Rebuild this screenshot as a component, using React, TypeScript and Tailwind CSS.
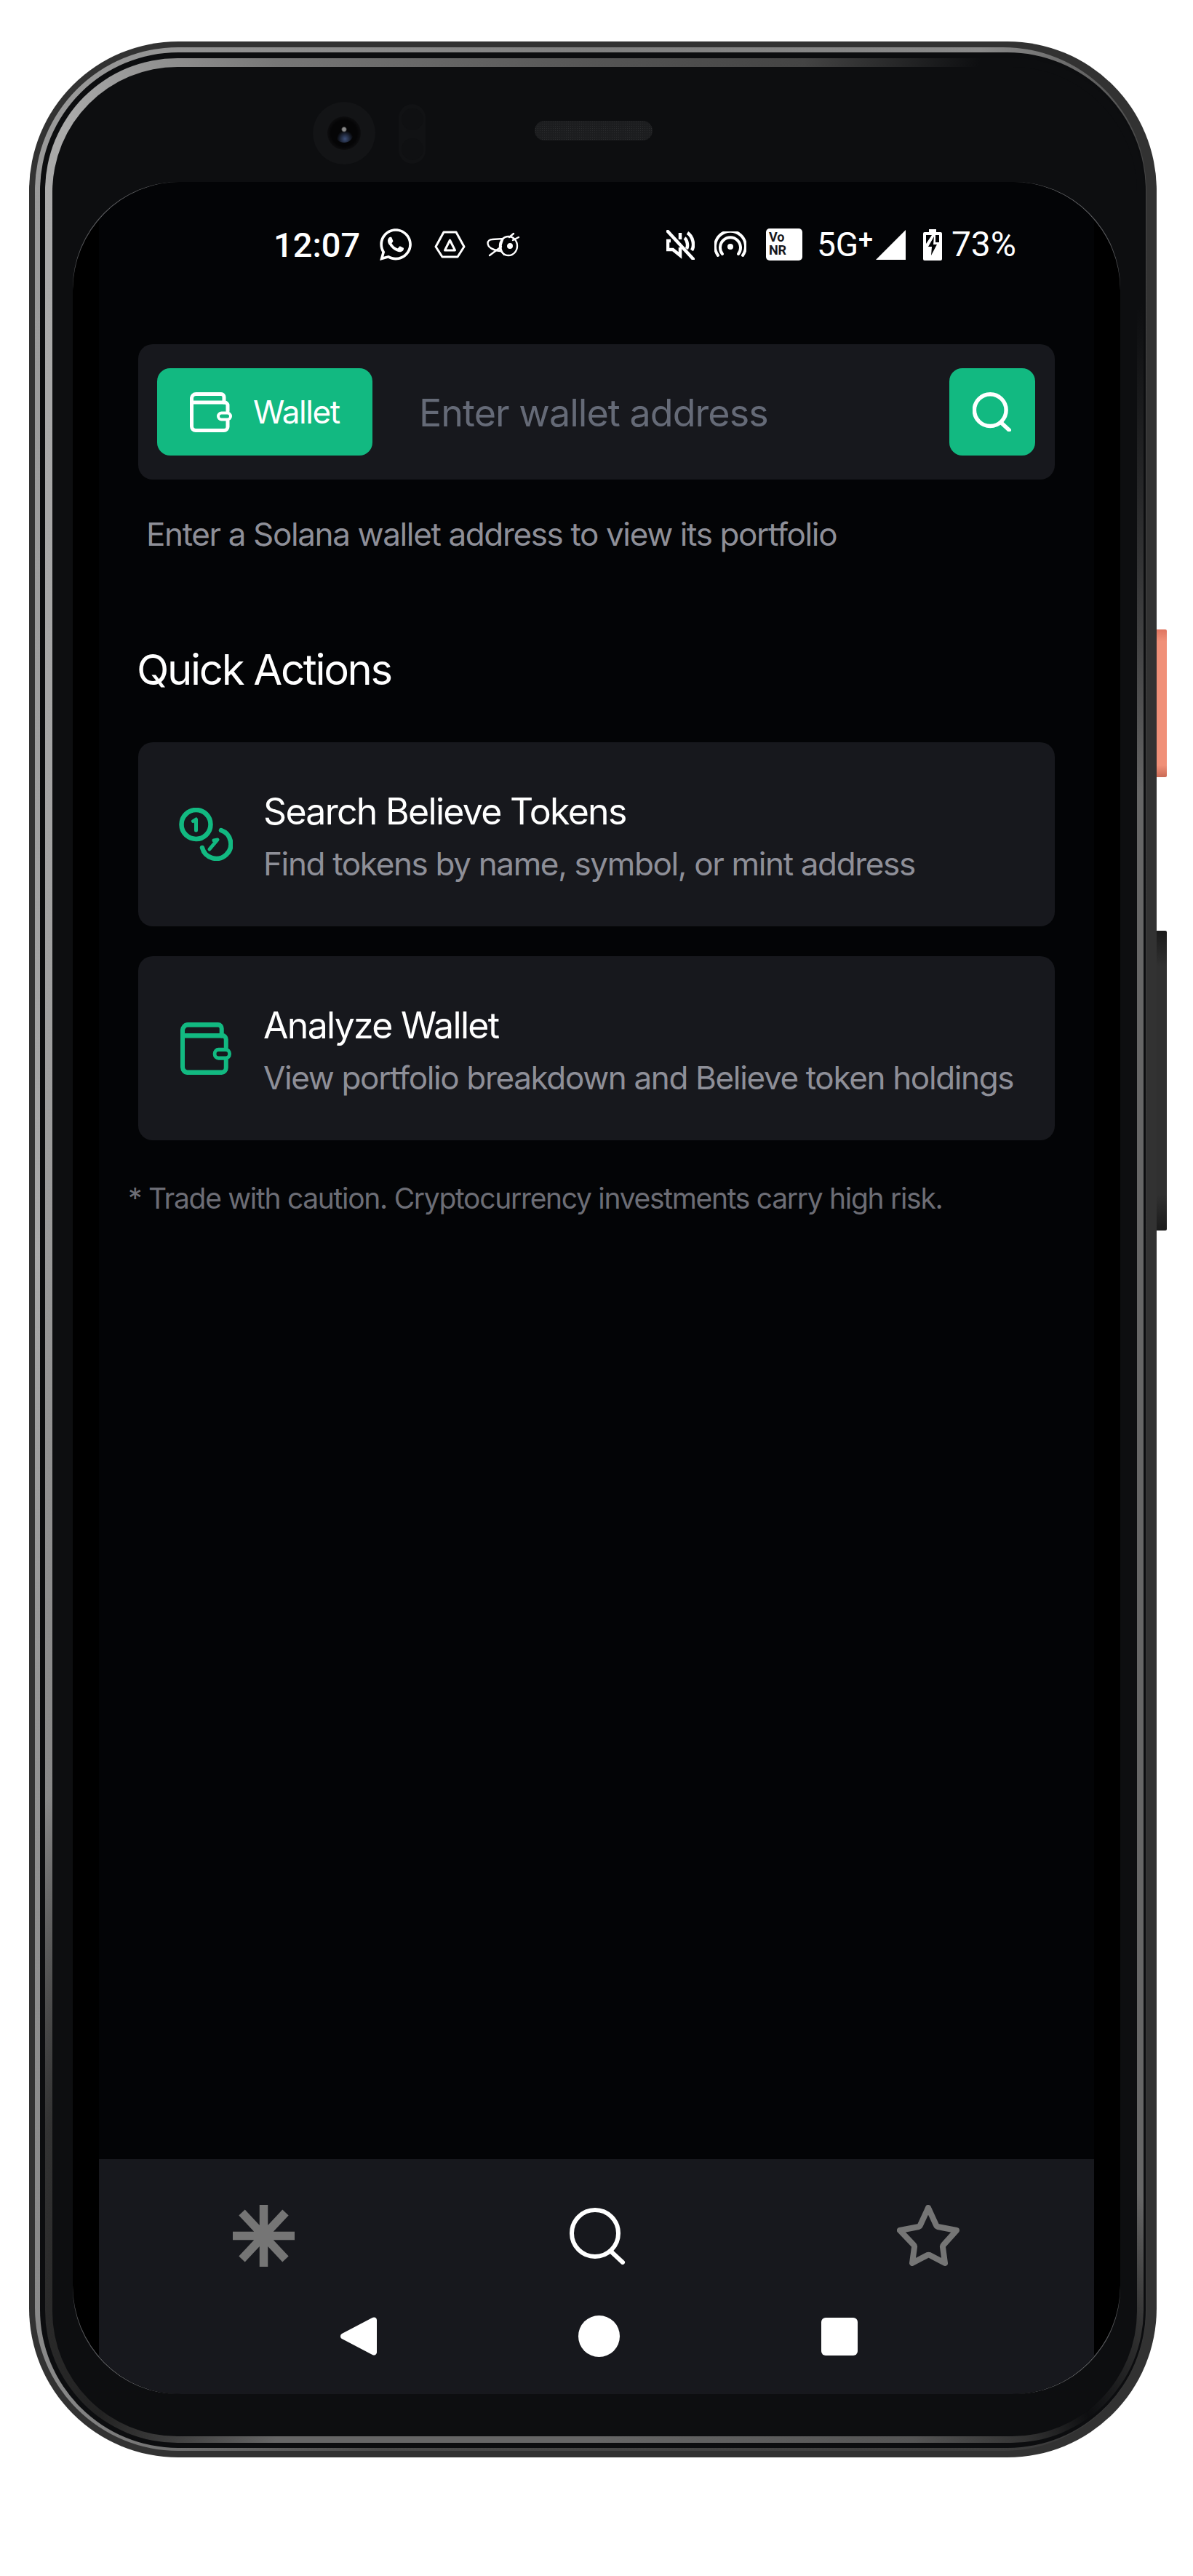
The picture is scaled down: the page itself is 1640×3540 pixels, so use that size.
import { FaWhatsapp } from "react-icons/fa";

const APP_FONT = "font-['Inter','Liberation_Sans',sans-serif]";
const STATUS_FONT = "font-['Roboto','Liberation_Sans',sans-serif]";

function WalletIcon({ className, stroke }: { className: string; stroke: string }) {
  return (
    <svg className={className} viewBox="0 0 58 55" preserveAspectRatio="none" fill="none" stroke={stroke} strokeWidth="5" strokeLinecap="round">
      <path d="M2.5 8.5a6 6 0 0 1 6-6H43a4 4 0 0 1 4 4V14" />
      <path d="M2.5 8.5V47A5.5 5.5 0 0 0 8 52.5h39a5 5 0 0 0 5-5V40" />
      <path d="M2.5 14H48a4 4 0 0 1 4 4v8" />
      <rect x="39" y="28.5" width="17" height="9" rx="4.5" strokeWidth="4" />
    </svg>
  );
}

function CoinsIcon() {
  return (
    <svg className="h-[73px] w-[74px]" viewBox="0 0 74 73" fill="none" stroke="#12b981" strokeWidth="6.5" strokeLinecap="round" strokeLinejoin="round">
      <circle cx="23.5" cy="23" r="20" />
      <path d="M19.5 18.5l4-2.5v15" strokeWidth="5" />
      <path d="M58 31A20 20 0 1 1 32 55" />
      <path d="M42 57l11-13-5 1" strokeWidth="5" />
    </svg>
  );
}

function SearchIcon({ className, strokeWidth }: { className: string; strokeWidth: number }) {
  return (
    <svg className={className} viewBox="0 0 78 79" fill="none" stroke="#fff" strokeWidth={strokeWidth} strokeLinecap="round">
      <ellipse cx="35" cy="36" rx="32" ry="32" />
      <path d="M58 62l15 14" />
    </svg>
  );
}

function AsteriskIcon() {
  return (
    <svg className="-ml-[3px] h-[85px] w-[85px]" viewBox="0 0 85 85" fill="none" stroke="#757575" strokeWidth="11.5">
      <path d="M42.5 0v85M0 42.5h85M12.5 10.5l60 64M72.5 10.5l-60 64" />
    </svg>
  );
}

function StarIcon() {
  return (
    <svg className="h-[84px] w-[86px]" viewBox="0 0 86 84" fill="none" stroke="#757575" strokeWidth="8" strokeLinejoin="round">
      <path d="M43 4l11 24a3 3 0 0 0 2 2l26 5-18 20a3 3 0 0 0-1 3l3 22-21-11a4 4 0 0 0-3 0L21 80l3-22a3 3 0 0 0-1-3L4 35l26-5a3 3 0 0 0 2-2Z" />
    </svg>
  );
}

function HexIcon() {
  return (
    <svg className="h-[38px] w-[43px]" viewBox="0 0 43 38" fill="none" stroke="#fff" strokeWidth="3" strokeLinejoin="round">
      <path d="M13 2h17l11 20-9 14H11L2 22Z" />
      <path d="M21.5 13l7 14h-14Z" />
    </svg>
  );
}

function BeeIcon() {
  return (
    <svg className="h-[34px] w-[46px]" viewBox="0 0 46 34" fill="none" stroke="#fff" strokeWidth="2.4" strokeLinecap="round">
      <path d="M1.5 15c0-3 3-5 6-5l15-1c-2 5-4 11-4 17C9 25 1.5 21 1.5 15Z" />
      <ellipse cx="30" cy="19" rx="12" ry="13" />
      <path d="M22 9c-4 6-4 16 2 22" />
      <circle cx="32" cy="19" r="2.8" fill="#fff" />
      <path d="M4 32l16-12M31 7l6-5M36 11l8-4" />
    </svg>
  );
}

function MuteIcon() {
  return (
    <svg className="h-[41px] w-[39px]" viewBox="0 0 39 41" fill="none" stroke="#fff" strokeWidth="4.5">
      <path d="M2 2l35 38" strokeLinecap="round" />
      <path d="M6 15H2v12h7l10 8V24" />
      <path d="M19 4v9" />
      <path d="M25 11c4 3 5 11 3 15M29 4c8 5 10 18 6 24" />
    </svg>
  );
}

function HotspotIcon() {
  return (
    <svg className="h-[36px] w-[44px]" viewBox="0 0 44 36" fill="none" stroke="#fff" strokeWidth="4" strokeLinecap="round">
      <circle cx="22" cy="21" r="4" fill="#fff" stroke="none" />
      <path d="M11 31a14 14 0 1 1 22 0" />
      <path d="M5 33a21 21 0 1 1 34 0" />
    </svg>
  );
}

function BatteryIcon() {
  return (
    <svg className="h-[43px] w-[26px]" viewBox="0 0 26 43">
      <path d="M8 0h10v4h6a2 2 0 0 1 2 2v35a2 2 0 0 1-2 2H2a2 2 0 0 1-2-2V6a2 2 0 0 1 2-2h6Z" fill="#fff" />
      <path d="M4 8h8l-8 12ZM17 8h5v10h-5Z" fill="#030406" />
      <path d="M15 10L7 24h5l-1 12 8-15h-5Z" fill="#030406" />
    </svg>
  );
}

function StatusBar() {
  return (
    <div className={`flex h-[172px] shrink-0 items-center pr-[107px] pl-[240px] text-white ${STATUS_FONT}`}>
      <span className="w-[115px] text-[47px] leading-none font-medium">12:07</span>
      <FaWhatsapp className="ml-[28px] size-[50px]" />
      <span className="ml-[28px]"><HexIcon /></span>
      <span className="ml-[29px]"><BeeIcon /></span>

      <span className="ml-auto"><MuteIcon /></span>
      <span className="ml-[27px]"><HotspotIcon /></span>
      <div className="ml-[27px] flex h-[44px] w-[50px] flex-col rounded-[5px] bg-white pl-[4px] pt-[3px] text-[18px] leading-[18px] font-bold text-[#17181d]">
        <span>Vo</span>
        <span>NR</span>
      </div>
      <span className="ml-[20px] flex h-[44px] w-[72px] items-start text-[46px] leading-[44px] font-normal">
        5G<span className="-mt-[2px] text-[36px] leading-[36px] font-medium">+</span>
      </span>
      <svg className="ml-[9px] h-[41px] w-[41px]" viewBox="0 0 41 41">
        <path d="M41 0v41H0Z" fill="#fff" />
      </svg>
      <span className="ml-[24px]"><BatteryIcon /></span>
      <span className="ml-[13px] text-[48px] leading-none font-normal">73%</span>
    </div>
  );
}

function ActionCard({ icon, title, subtitle }: { icon: React.ReactNode; title: string; subtitle: string }) {
  return (
    <div className="flex h-[253px] items-center rounded-[20px] bg-[#17181d] pl-[56px]">
      <div className="flex w-[116px] shrink-0 items-center">{icon}</div>
      <div className="flex flex-col pt-[8px]">
        <span className="text-[50px] leading-[72px] tracking-[-1.7px] text-white">{title}</span>
        <span className="text-[44px] leading-[72px] tracking-[-1.35px] text-[#8e8f98]">{subtitle}</span>
      </div>
    </div>
  );
}

function BottomNav() {
  return (
    <nav className="flex h-[323px] shrink-0 flex-col bg-[#17181d]">
      <div className="grid h-[210px] grid-cols-3 place-items-center">
        <AsteriskIcon />
        <SearchIcon className="ml-[4px] h-[79px] w-[78px]" strokeWidth={6} />
        <StarIcon />
      </div>
      <div className="mt-[5px] flex items-center justify-center gap-[277px] pl-[4px]">
        <svg className="h-[57px] w-[52px]" viewBox="0 0 52 57">
          <path d="M46 3L4 25a4 4 0 0 0 0 7l42 22a4 4 0 0 0 6-3V6a4 4 0 0 0-6-3Z" fill="#fff" />
        </svg>
        <div className="size-[57px] rounded-full bg-white" />
        <div className="h-[52px] w-[50px] rounded-[6px] bg-white" />
      </div>
    </nav>
  );
}

function Screen() {
  return (
    <div className="flex-1 rounded-[146px] bg-[#5a5b5e]">
      <div className={`flex h-full overflow-hidden rounded-[149px] bg-black px-[36px] ${APP_FONT}`}>
        <div className="flex min-w-0 flex-1 flex-col bg-[#030406]">
          <StatusBar />
          <main className="flex-1 px-[54px] pt-[51px]">
            <div className="flex h-[186px] items-center rounded-[20px] bg-[#17181d] pr-[27px] pl-[26px]">
              <button className="flex h-[120px] w-[296px] shrink-0 items-center rounded-[18px] bg-[#12b981] pl-[45px]">
                <WalletIcon className="h-[55px] w-[58px]" stroke="#fff" />
                <span className="ml-[29px] text-[44px] leading-none tracking-[-1.4px] text-white">Wallet</span>
              </button>
              <input
                className="mt-[4px] ml-[64px] min-w-0 flex-1 bg-transparent text-[52px] tracking-[-0.95px] outline-none placeholder:text-[#656a77]"
                placeholder="Enter wallet address"
              />
              <button className="flex h-[120px] w-[118px] shrink-0 items-center justify-center rounded-[18px] bg-[#12b981]">
                <SearchIcon className="h-[54px] w-[54px]" strokeWidth={8} />
              </button>
            </div>
            <p className="mt-[45px] ml-[11px] text-[44px] leading-[60px] tracking-[-1.37px] text-[#8e8f98]">
              Enter a Solana wallet address to view its portfolio
            </p>
            <h2 className="mt-[121px] -ml-[2px] text-[58px] leading-[70px] font-normal tracking-[-2.3px] text-white">Quick Actions</h2>
            <div className="mt-[65px] flex flex-col gap-[41px]">
              <ActionCard icon={<CoinsIcon />} title="Search Believe Tokens" subtitle="Find tokens by name, symbol, or mint address" />
              <ActionCard
                icon={<WalletIcon className="ml-[2px] h-[72px] w-[70px]" stroke="#12b981" />}
                title="Analyze Wallet"
                subtitle="View portfolio breakdown and Believe token holdings"
              />
            </div>
            <p className="mt-[55px] -ml-[14px] text-[39px] leading-[50px] tracking-[-1.3px] text-[#6c6d75]">
              * Trade with caution. Cryptocurrency investments carry high risk.
            </p>
          </main>
          <BottomNav />
        </div>
      </div>
    </div>
  );
}

export default function App() {
  return (
    <div className="h-[3540px] w-[1640px] bg-white pt-[57px] pl-[40px]">
      <div className="relative h-[3320px] w-[1550px] rounded-[205px] bg-[#323232] pt-[8px] pr-[14px] pb-[9px] pl-[8px]">
        <div className="absolute top-[808px] -right-[14px] h-[203px] w-[14px] rounded-r-[2px] bg-[linear-gradient(#df7560,#f09078_8%,#f09078_92%,#c96a55)]" />
        <div className="absolute top-[1222px] -right-[14px] h-[412px] w-[14px] rounded-r-[2px] bg-[linear-gradient(#1b1b1b,#303030_12%,#303030_88%,#1b1b1b)]" />

        <div className="h-full rounded-[197px] bg-[conic-gradient(#808080_0deg,#8a8a8a_18deg,#444_27deg,#3a3a3a_90deg,#3a3a3a_155deg,#4a4a4a_190deg,#888_205deg,#aaa_270deg,#999_335deg,#808080_360deg)] pt-[7px] pr-px pb-[4px] pl-[7px]">
          <div className="h-full rounded-[190px] bg-[#0c0d0f] pt-[8px] pr-[3px] pb-[7px] pl-[7px]">
            <div className="h-full rounded-[182px] bg-[conic-gradient(#555_0deg,#444_10deg,#0d0e10_18deg,#0d0e10_30deg,#666_50deg,#666_150deg,#333_153deg,#0d0e10_157deg,#333_160deg,#555_165deg,#666_180deg,#666_195deg,#222_203deg,#333_212deg,#888_225deg,#999_270deg,#aaa_335deg,#777_345deg,#555_360deg)] pt-[12px] pr-[9px] pb-[9px] pl-[10px]">
              <div className="flex h-full flex-col rounded-[172px] bg-[#0d0e10] pr-[23px] pb-[58px] pl-[28px]">
                <div className="flex h-[158px] shrink-0 items-start pl-[330px]">
                  <div className="mt-[48px] flex size-[86px] items-center justify-center rounded-full bg-[#131416]">
                    <div className="flex size-[46px] items-center justify-center rounded-full bg-[radial-gradient(#050506_55%,#1c1c1f)]">
                      <div className="size-[26px] rounded-full bg-[radial-gradient(circle_at_50%_30%,#888_10%,transparent_18%),radial-gradient(circle_at_55%_80%,#3d4f78,#050506_45%)]" />
                    </div>
                  </div>
                  <div className="mt-[51px] ml-[32px] flex h-[82px] w-[37px] flex-col items-center justify-around rounded-full bg-[#111214]">
                    <div className="size-[30px] rounded-full bg-[#0f1012]" />
                    <div className="size-[30px] rounded-full bg-[#0f1012]" />
                  </div>
                  <div className="mt-[74px] ml-[150px] h-[27px] w-[162px] rounded-full bg-[#1c1d1f] bg-[radial-gradient(#2c2d2f_1px,transparent_1px)] bg-[length:3px_3px]" />
                </div>
                <Screen />
              </div>
            </div>
          </div>
        </div>
      </div>
    </div>
  );
}
